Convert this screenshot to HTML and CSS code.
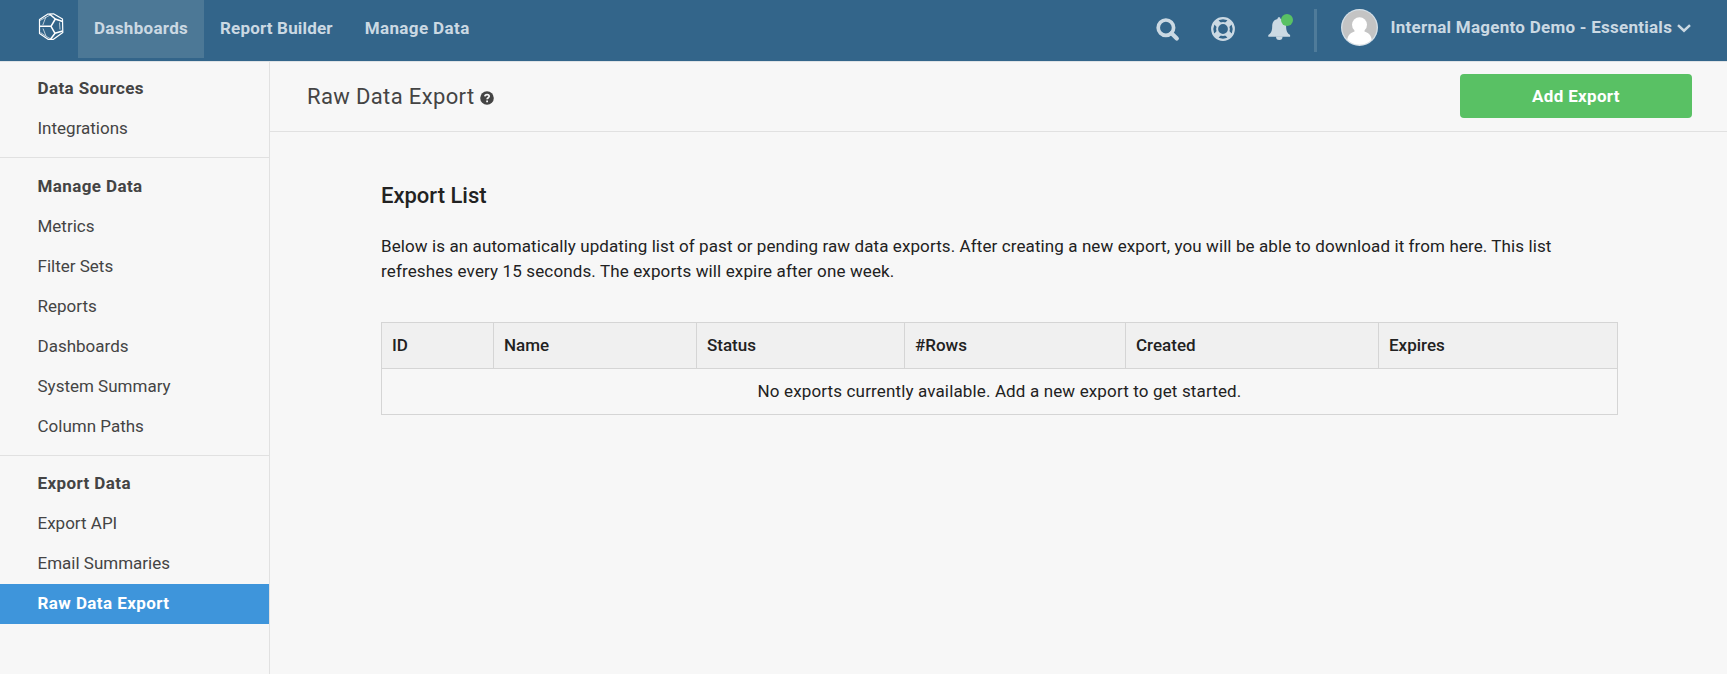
FILE: index.html
```html
<!DOCTYPE html>
<html lang="en">
<head>
<meta charset="utf-8">
<title>Raw Data Export</title>
<link rel="stylesheet" href="styles.css">
</head>
<body>
<header class="topbar">
  <a class="logo" aria-label="Home">
    <svg width="26" height="28" viewBox="0 0 26 28" fill="none" stroke="#fff" stroke-linejoin="round">
      <path stroke-width="1.2" d="M9.500 1.200 15.500.8 24.500 6 24.800 19.500 15.500 26.300 10 26.300 1.500 20.500V6.600Z"/>
      <path stroke-width="1.500" d="M1.500 13.300H13M13 13.300 17.300 6M13 13.300 17 20.300M17.300 6 11.500 1M17.300 6 24.600 8.500M17 20.300 24.600 18M17 20.300 12.500 26.300"/>
      <path stroke-width=".9" opacity=".75" d="M2 7.500 8 4.300l4.500-2.500M7.800 4.300 4.800 12M21.500 9.500 22 16.500M2.500 19.500 8 23.300l4.500 2.500M5 15.500l3 7.500"/>
    </svg>
  </a>
  <nav class="nav">
    <a class="nav-item active"><span class="t-dash">Dashboards</span></a>
    <a class="nav-item"><span class="t-report">Report Builder</span></a>
    <a class="nav-item"><span class="t-manage">Manage Data</span></a>
  </nav>
  <div class="tools">
    <svg class="search" width="24" height="24" viewBox="0 0 24 24" fill="none" stroke="#cbd9e3">
      <circle cx="9.900" cy="9.700" r="7.700" stroke-width="3.700"/>
      <path d="M15.500 15.300 20.800 20.600" stroke-width="4.200" stroke-linecap="round"/>
    </svg>
    <svg class="help" width="24" height="24" viewBox="0 0 24 24" fill="none" stroke="#cbd9e3">
      <circle cx="12" cy="12" r="10.800" stroke-width="2.200"/>
      <circle cx="12" cy="12" r="5.900" stroke-width="2"/>
      <path stroke-width="6" d="M4.600 4.600 8 8M19.400 4.600 16 8M4.600 19.400 8 16M19.400 19.400 16 16"/>
    </svg>
    <svg class="bell" width="26" height="28" viewBox="0 0 26 28">
      <path fill="#cbd9e3" d="M11 3.300c1.100 0 1.500.7 1.500 1.600 4.200.8 5.600 4 5.600 7.400 0 4.800 1.400 7.300 4 8.700v1.800H.3V21c2.600-1.400 3.900-3.900 3.900-8.700 0-3.400 1.200-6.600 5.300-7.400 0-.9.500-1.600 1.500-1.600Z"/>
      <path fill="#cbd9e3" d="M8 22.500h6.600a3.300 3.600 0 0 1-6.600 0Z"/>
      <circle cx="19" cy="6" r="6" fill="#59c164"/>
    </svg>
    <span class="divider"></span>
    <svg class="avatar" width="37" height="37" viewBox="0 0 37 37">
      <defs><clipPath id="face"><circle cx="18.500" cy="18.500" r="17.200"/></clipPath></defs>
      <circle cx="18.500" cy="18.500" r="18.500" fill="#d5e0e8"/>
      <circle cx="18.500" cy="18.500" r="17.200" fill="#c4c4c4"/>
      <g clip-path="url(#face)" fill="#fff">
        <circle cx="18.500" cy="15.700" r="7.500"/>
        <path d="M13.500 20h10v2.500c5 1.500 7.500 5 7.500 11V37H6v-3.500c0-6 2.500-9.500 7.500-11Z"/>
      </g>
    </svg>
    <span class="account">Internal Magento Demo - Essentials</span>
    <svg class="chevron" width="14" height="9" viewBox="0 0 14 9" fill="none" stroke="#cbd9e3" stroke-width="2.500"><path d="m1 1.200 6 5.500 6-5.500"/></svg>
  </div>
</header>
<div class="body">
  <aside class="sidebar">
    <section class="group">
      <h2 class="side-title">Data Sources</h2>
      <a class="side-link">Integrations</a>
    </section>
    <section class="group">
      <h2 class="side-title">Manage Data</h2>
      <a class="side-link">Metrics</a>
      <a class="side-link">Filter Sets</a>
      <a class="side-link">Reports</a>
      <a class="side-link">Dashboards</a>
      <a class="side-link">System Summary</a>
      <a class="side-link">Column Paths</a>
    </section>
    <section class="group export-group">
      <h2 class="side-title">Export Data</h2>
      <a class="side-link">Export API</a>
      <a class="side-link">Email Summaries</a>
      <a class="side-link current">Raw Data Export</a>
    </section>
  </aside>
  <main class="main">
    <div class="page-head">
      <h1 class="page-title">Raw Data Export</h1>
      <svg class="hint" width="14" height="14" viewBox="0 0 14 14">
        <circle cx="7" cy="7" r="6.800" fill="#444"/>
        <path d="M4.900 5.400C5 3 9.300 3 9.200 5.300 9.200 6.700 7.100 6.700 7.100 8.300" fill="none" stroke="#f7f7f7" stroke-width="1.700"/>
        <path d="M6.200 9.500H8v1.700H6.200z" fill="#f7f7f7"/>
      </svg>
      <button class="add">Add Export</button>
    </div>
    <div class="content">
      <h2 class="list-title">Export List</h2>
      <p class="intro"><span class="line1">Below is an automatically updating list of past or pending raw data exports. After creating a new export, you will be able to download it from here. This list</span> <span class="line2">refreshes every 15 seconds. The exports will expire after one week.</span></p>
      <table class="exports">
        <colgroup><col class="c1"><col class="c2"><col class="c3"><col class="c4"><col class="c5"><col class="c6"></colgroup>
        <thead><tr><th>ID</th><th>Name</th><th>Status</th><th>#Rows</th><th>Created</th><th>Expires</th></tr></thead>
        <tbody><tr><td colspan="6">No exports currently available. Add a new export to get started.</td></tr></tbody>
      </table>
    </div>
  </main>
</div>
</body>
</html>
```
FILE: styles.css
```css
* { box-sizing: border-box; }
body { margin: 0; height: 674px; display: flex; flex-direction: column; overflow: hidden; background: #f7f7f7; color: #222; font: 17px/25px Roboto, "Liberation Sans", sans-serif; }
h1, h2, p { margin: 0; }
svg { display: block; flex: none; }

.topbar { display: flex; flex: none; height: 62px; background: #33658a; border-bottom: 1px solid #dfe3e6; }
.logo { width: 78px; padding: 13px 0 0 38px; }
.nav { display: flex; }
.nav-item { display: flex; align-items: center; height: 58px; padding: 0 16px 2px; color: #cbd9e3; font-weight: 700; white-space: nowrap; }
.nav-item.active { width: 126px; background: #4c7896; }
.t-dash { letter-spacing: .31px; }
.t-report { letter-spacing: .18px; }
.t-manage { letter-spacing: .38px; }
.tools { display: flex; align-items: flex-start; margin-left: auto; padding-right: 36.5px; }
.search { margin: 18px 31px 0 0; }
.help { margin: 17px 32.5px 0 0; }
.bell { margin: 14px 20px 0 0; }
.divider { width: 3px; height: 43px; margin: 9px 24px 0 0; background: #4f7b9a; }
.avatar { margin: 9px 13px 0 0; }
.account { width: 281px; margin: 15px 5px 0 0; color: #cbd9e3; font-weight: 700; letter-spacing: .26px; white-space: nowrap; }
.chevron { margin-top: 24px; }

.body { display: flex; flex: 1; }
.sidebar { width: 270px; flex: none; border-right: 1px solid #e1e1e1; padding-top: 6px; color: #444; }
.group + .group { margin-top: 9px; padding-top: 8px; border-top: 1px solid #e1e1e1; }
.side-title, .side-link { display: block; height: 40px; padding-left: 37.5px; font-size: 17px; line-height: 40px; white-space: nowrap; }
.side-title { font-weight: 700; letter-spacing: .4px; }
.current { background: #3e95db; color: #fff; font-weight: 700; letter-spacing: .42px; }
.export-group .side-title, .export-group .side-link { line-height: 38px; }

.main { flex: 1; }
.page-head { display: flex; align-items: center; height: 70px; padding: 0 35px 0 37px; border-bottom: 1px solid #e1e1e1; }
.page-title { width: 167px; color: #444; font-size: 22px; font-weight: 400; letter-spacing: .36px; white-space: nowrap; }
.hint { margin: 3px 0 0 6px; }
.add { width: 232px; height: 44px; margin: 0 0 2px auto; padding: 0; border: 0; border-radius: 4px; background: #59c164; color: #fff; font: 700 17px/44px Roboto, "Liberation Sans", sans-serif; letter-spacing: .33px; }

.content { padding: 49px 109px 0 111px; }
.list-title { height: 30px; font-size: 22px; line-height: 30px; font-weight: 500; }
.intro { margin-top: 23px; white-space: nowrap; }
.intro span { display: block; }
.line1 { letter-spacing: .097px; }
.line2 { letter-spacing: .13px; }
.exports { width: 1237px; margin-top: 38px; table-layout: fixed; border-collapse: collapse; }
.exports th, .exports td { height: 46px; padding: 0 10px; border: 1px solid #d5d5d5; }
.exports th { background: #f0f0f0; font-weight: 500; text-align: left; }
.exports td { text-align: center; letter-spacing: .14px; }
.c1 { width: 112px; }
.c2 { width: 203px; }
.c3 { width: 208px; }
.c4 { width: 221px; }
.c5 { width: 253px; }
.c6 { width: 239px; }
```
